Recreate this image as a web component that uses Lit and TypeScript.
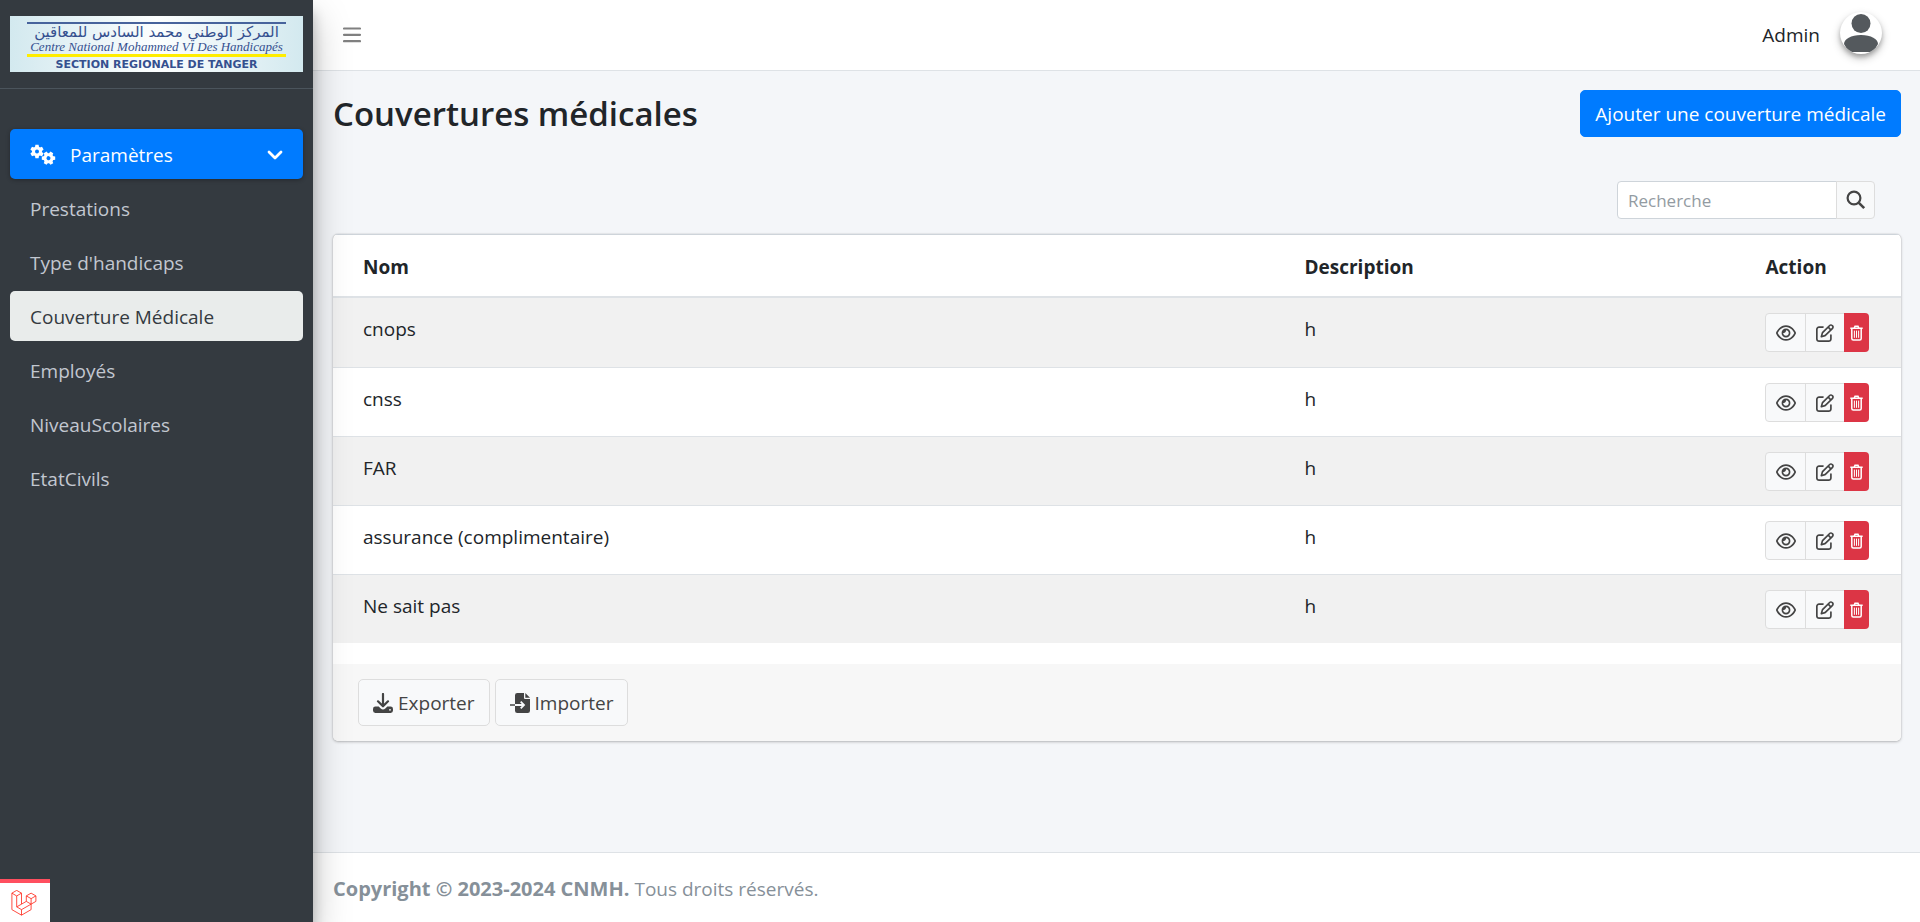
import { LitElement, html, css, svg } from "lit";
import { customElement, state } from "lit/decorators.js";
import { classMap } from "lit/directives/class-map.js";

const gear = (cx: number, cy: number, turn: number) => svg`
  <g transform="translate(${cx} ${cy}) rotate(${turn})">
    <circle r="3.5" fill="none" stroke="currentColor" stroke-width="3"></circle>
    ${[0, 60, 120].map(
      (a) => svg`<path transform="rotate(${a})" d="M-1.6-6.7h3.2l.5 2.9h-4.2zM-1.6 6.7h3.2l.5-2.9h-4.2z" fill="currentColor"></path>`
    )}
  </g>`;

const gearsIcon = html`<svg class="gears" viewBox="0 0 26 22" width="26" height="22" aria-hidden="true">
  ${gear(7, 7.5, 0)} ${gear(18.5, 14.2, 30)}
</svg>`;

const chevronIcon = html`<svg viewBox="0 0 16 10" width="16" height="10" aria-hidden="true">
  <path d="M2 2l6 6 6-6" fill="none" stroke="currentColor" stroke-width="2.8" stroke-linecap="round" stroke-linejoin="round"></path>
</svg>`;

const barsIcon = html`<svg viewBox="0 0 18 16" width="18" height="16" aria-hidden="true">
  <path d="M1 1.5h16M1 7.8h16M1 14.2h16" stroke="currentColor" stroke-width="2.2" stroke-linecap="round"></path>
</svg>`;

const searchIcon = html`<svg viewBox="0 0 20 20" width="20" height="20" aria-hidden="true">
  <circle cx="8" cy="8" r="6.4" fill="none" stroke="currentColor" stroke-width="2.2"></circle>
  <path d="M12.6 12.6l5.6 5.6" stroke="currentColor" stroke-width="2.6"></path>
</svg>`;

const eyeIcon = html`<svg viewBox="0 0 576 512" width="20" height="18" aria-hidden="true">
  <path fill="currentColor" d="M288 80c-65.2 0-118.8 29.6-159.9 67.7C89.6 183.5 63 226 49.4 256c13.6 30 40.2 72.5 78.6 108.3C169.2 402.4 222.8 432 288 432s118.8-29.6 159.9-67.7C486.4 328.5 513 286 526.6 256c-13.6-30-40.2-72.5-78.6-108.3C406.8 109.6 353.2 80 288 80zM95.4 112.6C142.5 68.8 207.2 32 288 32s145.5 36.8 192.6 80.6c46.8 43.5 78.1 95.4 93 131.1c3.3 7.9 3.3 16.7 0 24.6c-14.9 35.7-46.2 87.7-93 131.1C433.5 443.2 368.8 480 288 480s-145.5-36.8-192.6-80.6C48.6 356 17.3 304 2.5 268.3c-3.3-7.9-3.3-16.7 0-24.6C17.3 208 48.6 156 95.4 112.6zM288 336c44.2 0 80-35.8 80-80s-35.8-80-80-80c-.7 0-1.3 0-2 0c1.3 5.1 2 10.5 2 16c0 35.3-28.7 64-64 64c-5.5 0-10.9-.7-16-2c0 .7 0 1.3 0 2c0 44.2 35.8 80 80 80zm0-208a128 128 0 1 1 0 256 128 128 0 1 1 0-256z"></path>
</svg>`;

const editIcon = html`<svg viewBox="0 0 512 512" width="18" height="18" aria-hidden="true">
  <path fill="currentColor" d="M441 58.9L453.1 71c9.4 9.4 9.4 24.6 0 33.9L424 134.1 377.9 88 407 58.9c9.4-9.4 24.6-9.4 33.9 0zM209.8 256.2L344 121.9 390.1 168 255.8 302.2c-2.9 2.9-6.5 5-10.4 6.1l-58.5 16.7 16.7-58.5c1.1-3.9 3.2-7.5 6.1-10.4zM373.1 25L175.8 222.2c-8.7 8.7-15 19.4-18.3 31.1l-28.6 100c-2.4 8.4-.1 17.4 6.1 23.6s15.2 8.5 23.6 6.1l100-28.6c11.8-3.4 22.5-9.7 31.1-18.3L487 138.9c28.1-28.1 28.1-73.7 0-101.8L474.9 25C446.8-3.1 401.2-3.1 373.1 25zM88 64C39.4 64 0 103.4 0 152V424c0 48.6 39.4 88 88 88H360c48.6 0 88-39.4 88-88V312c0-13.3-10.7-24-24-24s-24 10.7-24 24V424c0 22.1-17.9 40-40 40H88c-22.1 0-40-17.9-40-40V152c0-22.1 17.9-40 40-40H200c13.3 0 24-10.7 24-24s-10.7-24-24-24H88z"></path>
</svg>`;

const trashIcon = html`<svg viewBox="0 0 13 16" width="13" height="16" aria-hidden="true">
  <g fill="none" stroke="currentColor">
    <path d="M.3 3.2h12.4M4.2 3l.8-1.8h3l.8 1.8" stroke-width="1.5"></path>
    <path d="M1.8 3.5v10q0 1.5 1.5 1.5h6.4q1.5 0 1.5-1.5v-10" stroke-width="1.5"></path>
    <path d="M4.4 5.6v7.2M6.5 5.6v7.2M8.6 5.6v7.2" stroke-width="1"></path>
  </g>
</svg>`;

const exportIcon = html`<svg viewBox="0 0 20 20" width="20" height="20" aria-hidden="true">
  <path d="M10 1v12M5 8.3l5 5 5-5" fill="none" stroke="currentColor" stroke-width="2.2" stroke-linecap="round" stroke-linejoin="round"></path>
  <path fill="currentColor" fill-rule="evenodd" d="M2.4 13.5h3.3l2 2q2.3 1.9 4.6 0l2-2h3.3q2.4 0 2.4 2.4v1.7q0 2.4-2.4 2.4H2.4Q0 20 0 17.6v-1.7q0-2.4 2.4-2.4zM17 15.9a.9.9 0 1 0 0 1.8.9.9 0 0 0 0-1.8z"></path>
</svg>`;

const importIcon = html`<svg viewBox="0 0 20 20" width="20" height="20" aria-hidden="true">
  <path fill="currentColor" d="M7.3 0H14v5q0 1 1 1h5v11.7Q20 20 17.7 20H7.3Q5 20 5 17.7V2.3Q5 0 7.3 0zM15.3 0L20 4.7h-4.7z"></path>
  <path d="M5 12h8.5M10.7 8.7l3.3 3.3-3.3 3.3" fill="none" stroke="#f8f9fa" stroke-width="1.8"></path>
  <path d="M0 12h5" stroke="currentColor" stroke-width="1.5"></path>
</svg>`;

const avatar = html`<svg viewBox="0 0 42 42" width="42" height="42" aria-hidden="true">
  <g fill="#54595d">
    <circle cx="21" cy="11.5" r="9.5"></circle>
    <path d="M4 32c0-5 7-9 17-9s17 4 17 9q-2 5-6.5 8h-21Q6 37 4 32z"></path>
  </g>
</svg>`;

const laravelIcon = html`<svg viewBox="0 0 50 52" width="26" height="26" aria-hidden="true">
  <path fill="none" stroke="#ff2d20" stroke-width="1.7" stroke-linejoin="round" d="M.8 6.3L10.4.8 20 6.3l-9.6 5.6zV39.25L20 50.3l19.2-11.05V28.3M10.4 11.9v21.8l9.6 5.55v11.05M20 6.3v22l-9.6 5.4M20 39.25l19.2-10.95M20 28.3l9.6-5.5M29.6 11.8l9.6-5.5 9.6 5.5-9.6 5.5zv11l9.6 5.5 9.6-5.5v-11M39.2 17.3v11"></path>
</svg>`;

interface Coverage {
  nom: string;
  description: string;
}

@customElement("app-root")
export class AppRoot extends LitElement {
  @state() private open = true;
  @state() private query = "";

  private readonly menu = [
    "Prestations",
    "Type d'handicaps",
    "Couverture Médicale",
    "Employés",
    "NiveauScolaires",
    "EtatCivils",
  ];

  private readonly coverages: Coverage[] = [
    { nom: "cnops", description: "h" },
    { nom: "cnss", description: "h" },
    { nom: "FAR", description: "h" },
    { nom: "assurance (complimentaire)", description: "h" },
    { nom: "Ne sait pas", description: "h" },
  ];

  static styles = css`
    :host {
      display: flex;
      min-height: 100vh;
      font: 400 19px/30px "Open Sans", "Noto Sans", sans-serif;
      color: #212529;
      background: #f4f6f9;
    }
    *, *::before, *::after { box-sizing: border-box; }
    a { color: inherit; text-decoration: none; }
    button, input { font: inherit; margin: 0; }
    button { cursor: pointer; }
    svg { display: block; flex: none; }

    .sidebar {
      flex: none;
      width: 313px;
      background: #343a40;
      color: #c2c7d0;
      box-shadow: 0 18px 35px rgba(0, 0, 0, .25), 0 12px 12px rgba(0, 0, 0, .22);
      position: relative;
      z-index: 2;
    }
    .brand {
      display: block;
      padding: 16px 10px;
      border-bottom: 1px solid #4b545c;
    }
    .logo {
      display: flex;
      flex-direction: column;
      align-items: center;
      height: 56px;
      padding: 6px 17px 0;
      color: #35508f;
      background: linear-gradient(90deg, #d3e9ef, #fcfefe 50%, #d3e9ef);
      white-space: nowrap;
    }
    .logo-ar {
      width: 100%;
      height: 19px;
      border-top: 2px solid #47639c;
      font: 400 15px/17px "DejaVu Sans", sans-serif;
      text-align: center;
    }
    .logo-fr {
      width: 100%;
      height: 16px;
      border-bottom: 3px solid #ffed00;
      font: italic 13px/12px "Liberation Serif", serif;
      text-align: center;
    }
    .logo-sec { font: 700 11px/15px "DejaVu Sans", sans-serif; }
    .menu {
      list-style: none;
      margin: 0;
      padding: 40px 10px 0;
      display: grid;
      gap: 4px;
    }
    .link {
      display: flex;
      align-items: center;
      width: 100%;
      height: 50px;
      padding: 2px 20px 0;
      border: 0;
      border-radius: 5px;
      background: none;
      color: inherit;
      text-align: left;
    }
    .link.current { background: #e9eceb; color: #343a40; }
    .link.parent {
      gap: 14px;
      background: #007bff;
      color: #fff;
      box-shadow: 0 1px 4px rgba(0, 0, 0, .3);
    }
    .label { flex: 1; }

    .page { flex: 1; min-width: 0; display: flex; flex-direction: column; }
    .topbar {
      display: flex;
      align-items: center;
      justify-content: space-between;
      height: 71px;
      padding: 0 38px 0 30px;
      background: #fff;
      border-bottom: 1px solid #dee2e6;
    }
    .toggle { padding: 0; border: 0; background: none; color: #808080; }
    .user { display: flex; align-items: center; gap: 20px; }
    .photo {
      border-radius: 50%;
      background: #fff;
      overflow: hidden;
      margin-bottom: 4px;
      box-shadow: 0 4px 8px rgba(0, 0, 0, .25), 0 3px 4px rgba(0, 0, 0, .2);
    }

    .content { flex: 1; padding: 19px 19px 20px 20px; }
    .heading { display: flex; align-items: center; justify-content: space-between; height: 47px; }
    h1 { margin: 0; font-size: 33px; line-height: 43px; font-weight: 600; }
    .btn {
      display: inline-flex;
      align-items: center;
      justify-content: center;
      gap: 5px;
      height: 47px;
      padding: 0 14px;
      border: 1px solid #ddd;
      border-radius: 5px;
      background: #f8f9fa;
      color: #444;
    }
    .btn.primary { border-color: #007bff; background: #007bff; color: #fff; }

    .search { display: flex; justify-content: flex-end; padding: 44px 26px 15px 0; }
    .field {
      width: 220px;
      height: 38px;
      padding: 0 10px;
      border: 1px solid #ced4da;
      border-radius: 4px 0 0 4px;
      background: #fff;
      color: #495057;
      font-size: 17px;
      outline: none;
    }
    .field::placeholder { color: #939ba2; opacity: 1; }
    .go {
      width: 39px;
      height: 38px;
      padding: 0 9px;
      margin-left: -1px;
      border: 1px solid #ddd;
      border-radius: 0 4px 4px 0;
      background: #f8f9fa;
      color: #444;
    }

    .card {
      background: #fff;
      border-radius: 5px;
      box-shadow: 0 0 1px rgba(0, 0, 0, .3), 0 1px 3px rgba(0, 0, 0, .25);
      overflow: hidden;
    }
    table { width: 100%; border-collapse: separate; border-spacing: 0; table-layout: fixed; }
    .c-name { width: 61%; }
    .c-desc { width: 29.4%; }
    th, td { padding: 15px 15px 14px; text-align: left; vertical-align: top; }
    th:first-child, td:first-child { padding-left: 30px; }
    th {
      padding-top: 18px;
      padding-bottom: 14px;
      font-weight: 700;
      border-top: 1px solid #ced4da;
      border-bottom: 2px solid #dee2e6;
      line-height: 29px;
    }
    td { height: 69px; line-height: 32px; border-top: 1px solid #dee2e6; }
    tbody tr:first-child td { border-top: 0; }
    tbody tr:nth-child(odd) { background: #f1f1f1; }
    .actions { display: flex; }
    .act {
      display: flex;
      align-items: center;
      justify-content: center;
      height: 39px;
      border: 1px solid #ddd;
      background: #f8f9fa;
      color: #444;
      padding: 0;
    }
    .act.view { width: 41px; border-radius: 4px 0 0 4px; }
    .act.edit { width: 39px; margin-left: -1px; border-right: 0; }
    .act.del {
      width: 25px;
      border: 0;
      border-radius: 0 4px 4px 0;
      background: #dc3545;
      color: #fff;
    }
    .card-foot { display: flex; gap: 5px; margin-top: 21px; padding: 15px 25px; background: #f7f7f7; }

    .footer {
      padding: 21px 20px 18px;
      background: #fff;
      border-top: 1px solid #dee2e6;
      color: #869099;
    }
    .footer strong { font-size: 20px; }
    .debug {
      position: fixed;
      left: 0;
      bottom: 0;
      z-index: 3;
      width: 50px;
      height: 43px;
      padding: 6px 11px;
      border: 0;
      border-top: 4px solid #ff4f5f;
      background: #fff;
    }
  `;

  render() {
    const rows = this.coverages.filter((c) => c.nom.toLowerCase().includes(this.query.toLowerCase()));
    return html`
      <aside class="sidebar">
        <a class="brand" href="#">
          <div class="logo">
            <div class="logo-ar" lang="ar" dir="rtl">المركز الوطني محمد السادس للمعاقين</div>
            <div class="logo-fr">Centre National Mohammed VI Des Handicapés</div>
            <div class="logo-sec">SECTION REGIONALE DE TANGER</div>
          </div>
        </a>
        <nav>
          <ul class="menu">
            <li>
              <button class="link parent" aria-expanded=${this.open} @click=${() => (this.open = !this.open)}>
                ${gearsIcon}<span class="label">Paramètres</span>${chevronIcon}
              </button>
            </li>
            ${this.open
              ? this.menu.map(
                  (m) => html`<li>
                    <a href="#" class=${classMap({ link: true, current: m === "Couverture Médicale" })}>${m}</a>
                  </li>`
                )
              : null}
          </ul>
        </nav>
      </aside>
      <div class="page">
        <header class="topbar">
          <button class="toggle" aria-label="Menu">${barsIcon}</button>
          <a class="user" href="#"><span>Admin</span><span class="photo">${avatar}</span></a>
        </header>
        <main class="content">
          <div class="heading">
            <h1>Couvertures médicales</h1>
            <a class="btn primary" href="#">Ajouter une couverture médicale</a>
          </div>
          <form class="search" @submit=${(e: Event) => e.preventDefault()}>
            <input
              class="field"
              type="text"
              placeholder="Recherche"
              aria-label="Recherche"
              @input=${(e: Event) => (this.query = (e.target as HTMLInputElement).value)}
            />
            <button class="go" type="submit" aria-label="Rechercher">${searchIcon}</button>
          </form>
          <section class="card">
            <table>
              <colgroup><col class="c-name" /><col class="c-desc" /><col /></colgroup>
              <thead>
                <tr><th>Nom</th><th>Description</th><th>Action</th></tr>
              </thead>
              <tbody>
                ${rows.map(
                  (c) => html`<tr>
                    <td>${c.nom}</td>
                    <td>${c.description}</td>
                    <td>
                      <div class="actions">
                        <a class="act view" href="#" aria-label="Voir">${eyeIcon}</a>
                        <a class="act edit" href="#" aria-label="Modifier">${editIcon}</a>
                        <button class="act del" aria-label="Supprimer">${trashIcon}</button>
                      </div>
                    </td>
                  </tr>`
                )}
              </tbody>
            </table>
            <div class="card-foot">
              <button class="btn">${exportIcon}Exporter</button>
              <button class="btn">${importIcon}Importer</button>
            </div>
          </section>
        </main>
        <footer class="footer"><strong>Copyright © 2023-2024 CNMH.</strong> Tous droits réservés.</footer>
      </div>
      <button class="debug" aria-label="Laravel">${laravelIcon}</button>
    `;
  }
}
